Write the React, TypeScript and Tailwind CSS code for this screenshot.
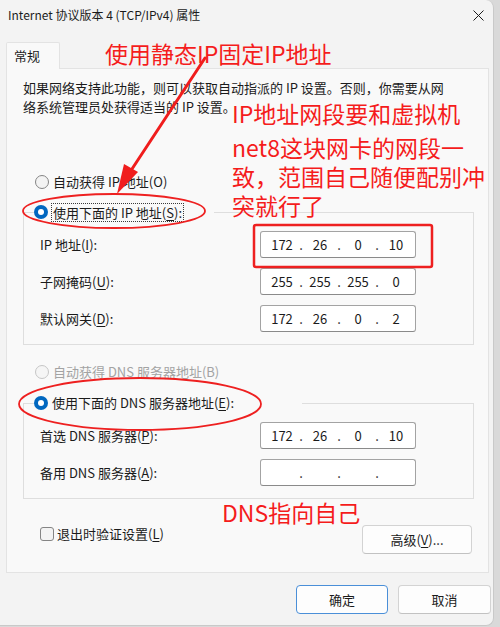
import React, { Fragment } from "react";

type IpProps = {
  parts: string[];
};

// four-octet address control, numbers centred in fixed cells
const IpBox: React.FC<IpProps> = ({ parts }) => (
  <div className="w-[156px] h-[27px] bg-white border border-[#a3a3a3] border-b-[#8a8a8a] rounded-[3px] flex items-center pl-[6px] text-[13px] text-[#1b1b1b]">
    {parts.map((p, i) => (
      <Fragment key={i}>
        <span className="w-[30px] text-center">{p}</span>
        {i < 3 && <span className="w-[8px] text-center">.</span>}
      </Fragment>
    ))}
  </div>
);

const Radio: React.FC<{ checked?: boolean; disabled?: boolean }> = ({ checked, disabled }) =>
  checked ? (
    <span className="w-[14px] h-[14px] rounded-full bg-[#0067c0] flex items-center justify-center shrink-0">
      <span className="w-[6px] h-[6px] rounded-full bg-white" />
    </span>
  ) : (
    <span
      className={
        disabled
          ? "w-[14px] h-[14px] rounded-full border border-[#c6c6c6] bg-[#f5f5f5] shrink-0"
          : "w-[14px] h-[14px] rounded-full border border-[#858585] bg-[#f3f3f3] shrink-0"
      }
    />
  );

const FieldRow: React.FC<{ label: React.ReactNode; parts: string[] }> = ({ label, parts }) => (
  <div className="flex items-center h-[27px]">
    <div className="w-[220px] text-[13px]">{label}</div>
    <IpBox parts={parts} />
  </div>
);

export default function App() {
  return (
    <div className="w-[500px] h-[627px] bg-[#d9d9d9] font-['Noto_Sans_CJK_SC','Noto_Sans',sans-serif] text-[#1b1b1b] overflow-hidden">
      <div className="relative w-[494px] h-[626px] bg-[#f3f3f3] rounded-r-[8px] border-r border-b border-[#c9c9c9] flex flex-col">
        {/* title bar */}
        <div className="h-[30px] flex items-center justify-between pl-[8px] pr-[8px]">
          <span className="text-[12px]">Internet 协议版本 4 (TCP/IPv4) 属性</span>
          <svg width="11" height="11" viewBox="0 0 11 11" className="mr-[1px]">
            <path d="M0.5 0.5 L10.5 10.5 M10.5 0.5 L0.5 10.5" stroke="#1b1b1b" strokeWidth="1" />
          </svg>
        </div>

        {/* tab */}
        <div className="mt-[12px] ml-[6px] w-[54px] h-[27px] -mb-px bg-[#f9f9f9] border border-b-0 border-[#e3e3e3] rounded-t-[2px] relative z-10 flex items-center pl-[7px] text-[13px]">
          常规
        </div>

        {/* tab page */}
        <div className="ml-[6px] w-[483px] h-[505px] bg-[#f9f9f9] border border-[#e3e3e3] flex flex-col">
          <p className="pt-[9px] pl-[16px] text-[13px] leading-[19px]">
            如果网络支持此功能，则可以获取自动指派的 IP 设置。否则，你需要从网
            <br />
            络系统管理员处获得适当的 IP 设置。
          </p>

          <div className="mt-[56px] ml-[28px] h-[20px] flex items-center gap-[4px] text-[13px]">
            <Radio />
            <span>自动获得 IP 地址(O)</span>
          </div>

          {/* static address group */}
          <div className="mt-[20px] ml-[16px] w-[451px] h-[133px] border border-[#dedede] flex flex-col">
            <div className="-mt-[11px] ml-[10px] w-[180px] h-[20px] bg-[#f9f9f9] flex items-center gap-[3px] text-[13px]">
              <Radio checked />
              <span className="border border-dotted border-[#3a3a3a] px-[1px] leading-[17px]">
                使用下面的 IP 地址(<u className="underline-offset-2">S</u>):
              </span>
            </div>
            <div className="mt-[9px] pl-[16px] flex flex-col gap-[10px]">
              <FieldRow label={<>IP 地址(<u className="underline-offset-2">I</u>):</>} parts={["172", "26", "0", "10"]} />
              <FieldRow label={<>子网掩码(<u className="underline-offset-2">U</u>):</>} parts={["255", "255", "255", "0"]} />
              <FieldRow label={<>默认网关(<u className="underline-offset-2">D</u>):</>} parts={["172", "26", "0", "2"]} />
            </div>
          </div>

          <div className="mt-[17px] ml-[28px] h-[20px] flex items-center gap-[4px] text-[13px] text-[#a3a3a3]">
            <Radio disabled />
            <span>自动获得 DNS 服务器地址(B)</span>
          </div>

          {/* dns group */}
          <div className="mt-[21px] ml-[16px] w-[451px] h-[96px] border border-[#dedede] flex flex-col">
            <div className="-mt-[11px] ml-[10px] w-[268px] h-[20px] bg-[#f9f9f9] flex items-center gap-[4px] text-[13px]">
              <Radio checked />
              <span>
                使用下面的 DNS 服务器地址(<u className="underline-offset-2">E</u>):
              </span>
            </div>
            <div className="mt-[9px] pl-[16px] flex flex-col gap-[10px]">
              <FieldRow label={<>首选 DNS 服务器(<u className="underline-offset-2">P</u>):</>} parts={["172", "26", "0", "10"]} />
              <FieldRow label={<>备用 DNS 服务器(<u className="underline-offset-2">A</u>):</>} parts={["", "", "", ""]} />
            </div>
          </div>

          <div className="mt-[26px] pl-[33px] pr-[16px] flex items-start justify-between">
            <div className="mt-[2px] flex items-center gap-[3px] text-[13px] h-[14px]">
              <span className="w-[14px] h-[14px] rounded-[3px] border border-[#858585] bg-[#f3f3f3]" />
              <span>
                退出时验证设置(<u className="underline-offset-2">L</u>)
              </span>
            </div>
            <button className="w-[110px] h-[29px] bg-[#fdfdfd] border border-[#d3d3d3] border-b-[#c2c2c2] rounded-[4px] text-[13px] flex items-center justify-center">
              高级(<u className="underline-offset-2">V</u>)...
            </button>
          </div>
        </div>

        {/* dialog buttons */}
        <div className="mt-[12px] pr-[2px] flex justify-end gap-[10px]">
          <button className="w-[92px] h-[29px] bg-[#fdfdfd] border-[1.5px] border-[#4a8fd8] rounded-[4px] text-[13px] flex items-center justify-center">
            确定
          </button>
          <button className="w-[93px] h-[29px] bg-[#fdfdfd] border border-[#d3d3d3] border-b-[#c2c2c2] rounded-[4px] text-[13px] flex items-center justify-center">
            取消
          </button>
        </div>

        {/* red markup drawn over the dialog */}
        <svg className="absolute inset-0 pointer-events-none" width="494" height="626">
          <path d="M205 58 L130 172" stroke="#f01d1d" strokeWidth="3" strokeLinecap="round" />
          <polygon points="117,194 138,172 124,164" fill="#f01d1d" />
          <ellipse cx="114" cy="211" rx="91" ry="17" fill="none" stroke="#ee2020" strokeWidth="1.8" />
          <ellipse cx="140" cy="404" rx="121" ry="26" fill="none" stroke="#ee2020" strokeWidth="1.8" />
          <rect x="254" y="225" width="178" height="42" rx="2" fill="none" stroke="#ee2020" strokeWidth="2.5" />
        </svg>
        <div className="absolute left-[105px] top-[39px] text-[23px] leading-[28px] text-[#f51c1c] whitespace-nowrap">
          使用静态IP固定IP地址
        </div>
        <div className="absolute left-[232px] top-[99px] text-[23px] leading-[28px] text-[#f51c1c] whitespace-nowrap">
          IP地址网段要和虚拟机
        </div>
        <div className="absolute left-[232px] top-[133px] flex flex-col text-[23px] text-[#f51c1c] whitespace-nowrap">
          <span className="h-[29px] leading-[29px]">net8这块网卡的网段一</span>
          <span className="h-[29px] leading-[29px]">致，范围自己随便配别冲</span>
          <span className="h-[29px] leading-[29px]">突就行了</span>
        </div>
        <div className="absolute left-[222px] top-[498px] text-[23px] leading-[28px] text-[#f51c1c] whitespace-nowrap">
          DNS指向自己
        </div>
      </div>
    </div>
  );
}
